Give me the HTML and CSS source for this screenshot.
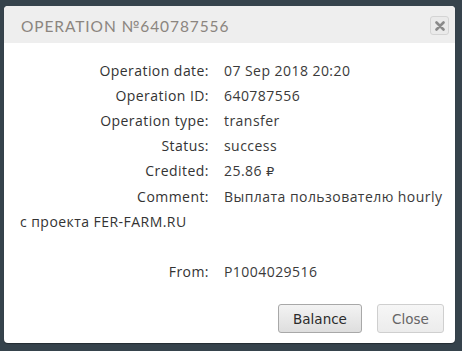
FILE: index.html
```html
<!DOCTYPE html>
<html>
<head>
<meta charset="utf-8">
<link rel="stylesheet" href="styles.css">
</head>
<body>
<div class="dialog">
  <div class="dialog-header">
    <span class="dialog-title">OPERATION №640787556</span>
    <button class="close-x" aria-label="close">
      <svg width="10" height="10" viewBox="0 0 10 10"><path d="M1.5 1.5 L8.5 8.5 M8.5 1.5 L1.5 8.5" stroke="#8a8a8a" stroke-width="2.6" stroke-linecap="round"/></svg>
    </button>
  </div>
  <div class="dialog-body">
    <div class="row"><span class="label">Operation date:</span><span class="value">07 Sep 2018 20:20</span></div>
    <div class="row"><span class="label">Operation ID:</span><span class="value">640787556</span></div>
    <div class="row"><span class="label">Operation type:</span><span class="value">transfer</span></div>
    <div class="row"><span class="label">Status:</span><span class="value">success</span></div>
    <div class="row"><span class="label">Credited:</span><span class="value">25.86 <span class="rub">₽</span></span></div>
    <div class="row"><span class="label">Comment:</span><span class="value nowrap">Выплата пользователю hourly</span><br>с проекта FER-FARM.RU<br>&nbsp;</div>
    <div class="row"><span class="label">From:</span><span class="value">P1004029516</span></div>
  </div>
  <div class="dialog-footer">
    <button class="btn btn-primary">Balance</button>
    <button class="btn btn-close">Close</button>
  </div>
</div>
</body>
</html>
```
FILE: styles.css
```css
html, body {
  margin: 0;
  padding: 0;
}
body {
  background: #36434c;
  width: 462px;
  height: 351px;
  overflow: hidden;
  padding: 6px 7px 0 4px;
  box-sizing: border-box;
}
.dialog {
  background: #ffffff;
  border-radius: 4px;
  height: 337px;
  box-shadow: 0 1px 1px rgba(0,0,0,0.35);
  display: flex;
  flex-direction: column;
  overflow: hidden;
}
.dialog-header {
  background: #eeeeee;
  height: 37px;
  display: flex;
  align-items: center;
  justify-content: space-between;
  padding: 0 6px 0 17px;
}
.dialog-title {
  font-family: "Lato", sans-serif;
  font-size: 15.5px;
  letter-spacing: 0.9px;
  color: #8b857f;
  font-weight: 400;
  margin-top: 2px;
}
.close-x {
  width: 19px;
  height: 19px;
  padding: 0;
  border: 1px solid #d4d4d4;
  border-radius: 3px;
  background: #eaeaea;
  display: flex;
  align-items: center;
  justify-content: center;
  margin-top: 2px;
}
.dialog-body {
  padding: 15px 11px 0 16px;
  font-family: "Open Sans", sans-serif;
  font-size: 14px;
  letter-spacing: 0.45px;
  line-height: 25px;
  color: #333333;
  flex: 1;
}
.label {
  display: inline-block;
  width: 189px;
  text-align: right;
  margin-right: 15px;
}
.value {
  color: #3a3a3a;
}
.nowrap {
  white-space: nowrap;
}
.rub {
  font-family: "DejaVu Sans", sans-serif;
  font-size: 13px;
}
.dialog-footer {
  display: flex;
  justify-content: flex-end;
  gap: 15px;
  padding: 0 11px 10px 0;
}
.btn {
  height: 29px;
  font-family: "DejaVu Sans", sans-serif;
  font-size: 13.5px;
  letter-spacing: 0;
  border-radius: 3px;
  padding: 0;
}
.btn-primary {
  width: 84px;
  color: #2b2b2b;
  border: 1px solid #a8a8a8;
  background: linear-gradient(#f3f3f3, #dedede);
}
.btn-close {
  width: 67px;
  color: #666666;
  border: 1px solid #cfcfcf;
  background: linear-gradient(#f6f6f6, #ececec);
}
```
